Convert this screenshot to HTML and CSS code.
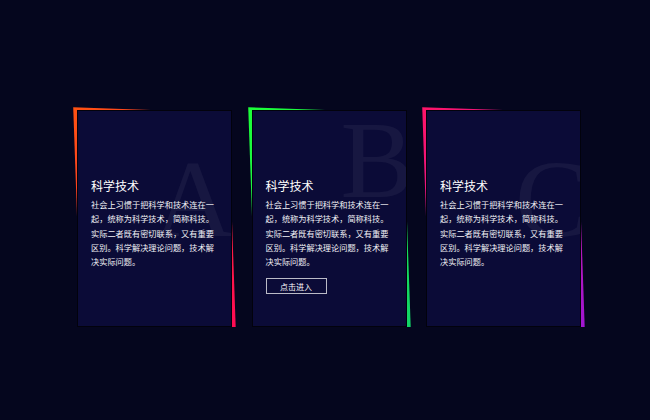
FILE: index.html
```html
<!DOCTYPE html>
<html lang="zh">
<head>
<meta charset="utf-8">
<title>科学技术</title>
<link rel="stylesheet" href="styles.css">
</head>
<body>
<main class="stage">
  <article class="card card-orange">
    <div class="card-box">
      <span class="mark mark-a">A</span>
      <div class="card-content">
        <h2 class="card-title">科学技术</h2>
        <p class="card-text">社会上习惯于把科学和技术连在一起，统称为科学技术，简称科技。实际二者既有密切联系，又有重要区别。科学解决理论问题，技术解决实际问题。</p>
      </div>
    </div>
  </article>
  <article class="card card-green is-active">
    <div class="card-box">
      <span class="mark">B</span>
      <div class="card-content">
        <h2 class="card-title">科学技术</h2>
        <p class="card-text">社会上习惯于把科学和技术连在一起，统称为科学技术，简称科技。实际二者既有密切联系，又有重要区别。科学解决理论问题，技术解决实际问题。</p>
        <a class="card-btn" href="#">点击进入</a>
      </div>
    </div>
  </article>
  <article class="card card-purple">
    <div class="card-box">
      <span class="mark">C</span>
      <div class="card-content">
        <h2 class="card-title">科学技术</h2>
        <p class="card-text">社会上习惯于把科学和技术连在一起，统称为科学技术，简称科技。实际二者既有密切联系，又有重要区别。科学解决理论问题，技术解决实际问题。</p>
      </div>
    </div>
  </article>
</main>
</body>
</html>
```

FILE: styles.css
```css
html {
  background: #05061e;
}

body {
  margin: 0;
  font-family: "Noto Sans CJK TC", "Noto Sans CJK SC", "Noto Sans", sans-serif;
  color: #fff;
}

.stage {
  display: flex;
  gap: 19.5px;
  padding: 110px 0 0 77px;
}

.card {
  position: relative;
  isolation: isolate;
  width: 155px;
  height: 217px;
  flex: none;
}

.card::before {
  content: "";
  position: absolute;
  inset: 0;
  transform: skew(2deg, 2deg);
  z-index: -1;
}

.card-orange::before {
  background: linear-gradient(315deg, #ff0a55, #ff5212);
}

.card-green::before {
  background: linear-gradient(315deg, #12d468, #1cff38);
}

.card-purple::before {
  background: linear-gradient(315deg, #a016d2, #ff1468);
}

.card-box {
  position: relative;
  box-sizing: border-box;
  height: 100%;
  border: 1px solid #02020c;
  background: #0b0b37;
  overflow: hidden;
  padding: 67px 13px 0 13px;
}

.mark {
  position: absolute;
  top: 33px;
  left: 88px;
  font-family: "Liberation Serif", serif;
  font-size: 110px;
  line-height: 1;
  color: rgba(255, 255, 255, 0.05);
}

.mark-a {
  left: 76px;
}

.is-active .mark {
  top: -6px;
}

.card-content {
  position: relative;
}

.card-title {
  margin: 0;
  font-size: 12px;
  line-height: 16px;
  font-weight: 400;
  font-family: "Noto Sans CJK SC", sans-serif;
}

.card-text {
  margin: 3px 0 0;
  width: 126px;
  font-size: 8.2px;
  line-height: 14.3px;
  color: #f2f2f6;
}

.card-btn {
  display: flex;
  align-items: center;
  justify-content: center;
  box-sizing: border-box;
  width: 61px;
  height: 16px;
  margin-top: 10px;
  border: 1px solid rgba(255, 255, 255, 0.72);
  color: #fff;
  font-size: 8px;
  text-decoration: none;
}
```
